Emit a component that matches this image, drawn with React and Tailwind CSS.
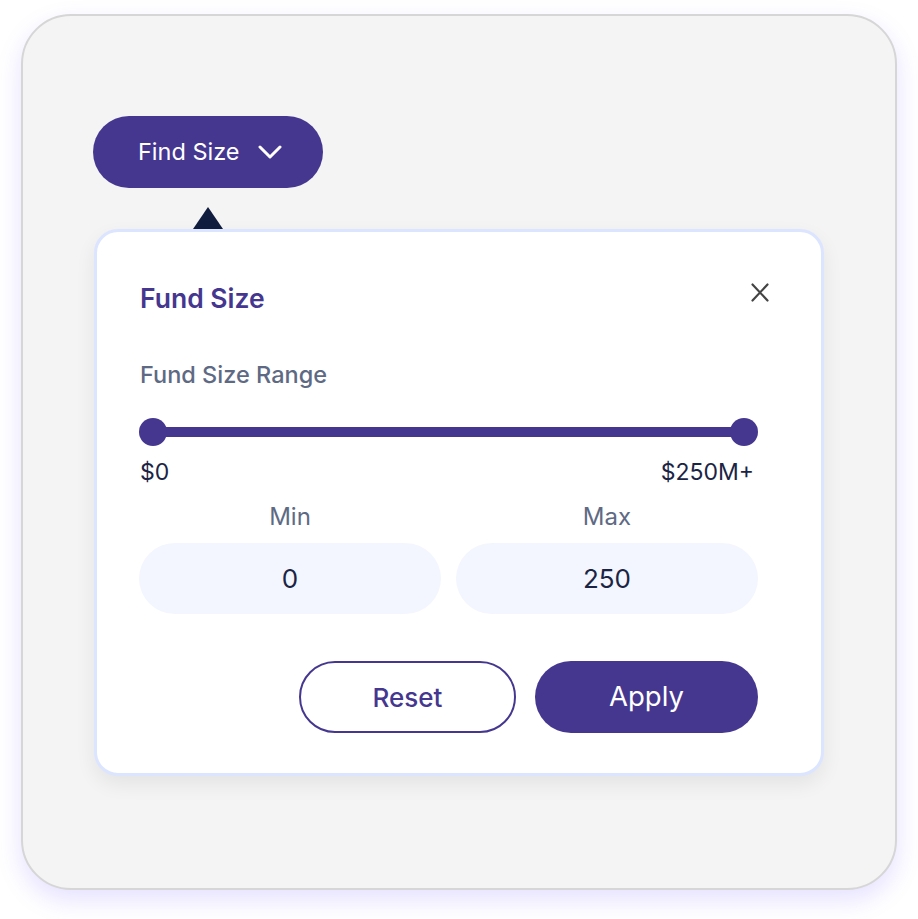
import React from "react";

export default function App() {
  return (
    <div
      className="w-[918px] h-[919px] bg-white pt-[14px] pl-[21px]"
      style={{ fontFamily: "Inter, 'Noto Sans', sans-serif" }}
    >
      <div className="w-[876px] h-[876px] rounded-[50px] border-2 border-[#d6d6d6] bg-[#f4f4f4] shadow-[0_10px_24px_rgba(110,90,255,0.18)] pt-[100px] pl-[70px]">
        <button className="w-[230px] h-[72px] rounded-full bg-[#45378f] flex items-center pl-[45px] text-white text-[23.5px] leading-none">
          <span>Find Size</span>
          <svg className="ml-[18px]" width="24" height="14" viewBox="0 0 24 14" fill="none">
            <path d="M2 2L12 12L22 2" stroke="white" strokeWidth="3" strokeLinecap="round" strokeLinejoin="round" />
          </svg>
        </button>
        <div className="mt-[19px] ml-[100px] w-0 h-0 border-l-[15px] border-r-[15px] border-b-[22px] border-l-transparent border-r-transparent border-b-[#111d3f]" />
        <div className="ml-[1px] w-[730px] h-[547px] rounded-[24px] border-[3px] border-[#dce5ff] bg-white shadow-[0_8px_20px_rgba(0,0,0,0.07)] pt-[50px] pl-[43px] pr-[63px]">
          <div className="flex items-start justify-between">
            <div className="text-[26.5px] leading-[32px] font-semibold text-[#45378f]">Fund Size</div>
            <svg className="mt-[1px] -mr-[11px]" width="18" height="19" viewBox="0 0 18 19" fill="none">
              <path d="M1.5 1.5L16.5 17.5M16.5 1.5L1.5 17.5" stroke="#444" strokeWidth="2.2" strokeLinecap="round" />
            </svg>
          </div>
          <div className="mt-[47px] text-[23.5px] leading-[28px] font-medium text-[#5e6a84]">Fund Size Range</div>
          <div className="mt-[29px] relative h-[28px] w-[619px] -ml-[1px]">
            <div className="absolute left-[14px] right-[14px] top-[9px] h-[10px] bg-[#45378f]" />
            <div className="absolute left-0 top-0 w-[28px] h-[28px] rounded-full bg-[#45378f]" />
            <div className="absolute right-0 top-0 w-[28px] h-[28px] rounded-full bg-[#45378f]" />
          </div>
          <div className="mt-[13px] flex justify-between text-[23px] leading-[26px] text-[#1b2444] pr-[4px]">
            <span>$0</span>
            <span>$250M+</span>
          </div>
          <div className="mt-[18px] grid grid-cols-2 gap-[15px] w-[619px] -ml-[1px]">
            <div className="flex flex-col items-center">
              <div className="text-[24px] leading-[28px] text-[#5e6a84]">Min</div>
              <div className="mt-[12px] w-full h-[71px] rounded-full bg-[#f3f6fe] flex items-center justify-center text-[26px] text-[#1b2444]">0</div>
            </div>
            <div className="flex flex-col items-center">
              <div className="text-[24px] leading-[28px] text-[#5e6a84]">Max</div>
              <div className="mt-[12px] w-full h-[71px] rounded-full bg-[#f3f6fe] flex items-center justify-center text-[26px] text-[#1b2444]">250</div>
            </div>
          </div>
          <div className="mt-[47px] flex justify-end gap-[19px]">
            <button className="w-[217px] h-[72px] rounded-full border-2 border-[#45378f] text-[#45378f] text-[26px] font-medium flex items-center justify-center">Reset</button>
            <button className="w-[223px] h-[72px] rounded-full bg-[#45378f] text-white text-[27.5px] flex items-center justify-center">Apply</button>
          </div>
        </div>
      </div>
    </div>
  );
}
